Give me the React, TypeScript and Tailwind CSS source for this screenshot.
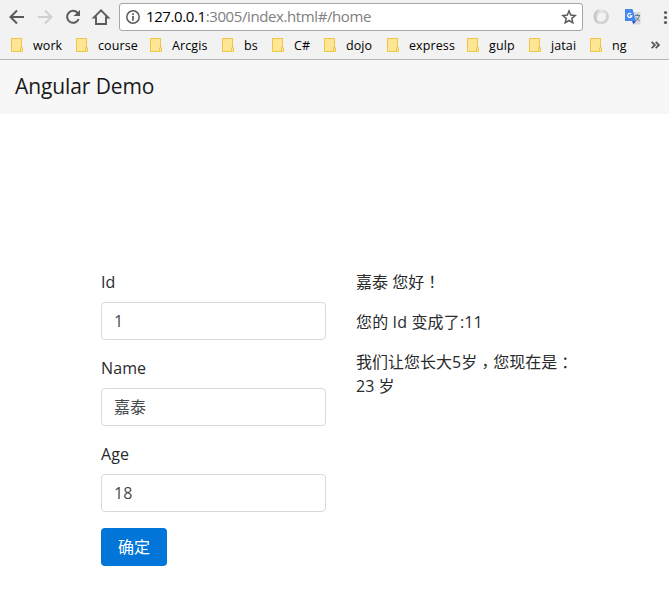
import { useState } from 'react';

const FONT = 'font-["Open_Sans","Noto_Sans_CJK_SC",sans-serif]';

const bookmarks = [
  { name: 'work', box: 'w-[65px]' },
  { name: 'course', box: 'w-[74px]' },
  { name: 'Arcgis', box: 'w-[72px]' },
  { name: 'bs', box: 'w-[50px]' },
  { name: 'C#', box: 'w-[52px]' },
  { name: 'dojo', box: 'w-[63px]' },
  { name: 'express', box: 'w-[80px]' },
  { name: 'gulp', box: 'w-[62px]' },
  { name: 'jatai', box: 'w-[61px]' },
  { name: 'ng', box: 'w-[62px]' },
];

function FolderIcon() {
  return (
    <svg width="12" height="14" viewBox="0 0 12 14" className="shrink-0" fill="#ffe694" stroke="#ecc54a">
      <rect x=".5" y=".5" width="10" height="13" />
      <rect x="9.500" y="9.500" width="2" height="4" rx=".5" />
    </svg>
  );
}

function Toolbar() {
  return (
    <div className="flex h-[34px] items-center">
      <svg width="119" height="34" viewBox="0 0 119 34" fill="none" className="shrink-0">
        <g stroke="#5a5a5a" strokeWidth="2">
          <path d="M24 17H11M17 10.500L10.500 17l6.500 6.500" />
          <path d="M38 17h13M45 10.500l6.500 6.500l-6.500 6.500" stroke="#d0d0d0" />
          <path d="M77.500 12.700A6 6 0 1 0 78.700 19" />
          <path d="M93.800 17.500h2.200V24h10v-6.500h2.200L101 10.300z" strokeWidth="1.900" />
        </g>
        <path d="M80 10v6h-6.500z" fill="#5a5a5a" />
      </svg>
      <div className="flex h-7 w-[464px] shrink-0 items-center rounded-[3px] border border-[#a5a5a5] bg-white">
        <svg width="14" height="14" viewBox="0 0 14 14" fill="none" stroke="#5a5a5a" className="ml-[6px] shrink-0">
          <circle cx="7" cy="7" r="6.200" strokeWidth="1.500" />
          <path d="M7 3.300v1.700M7 6v4.700" strokeWidth="1.700" />
        </svg>
        <div className="ml-[6px] grow whitespace-nowrap pb-[2px] text-[15px] leading-[24px] tracking-[-0.4px] text-[#808080]">
          <span className="text-black">127.0.0.1</span>:3005/index.html#/home
        </div>
        <svg width="16" height="16" viewBox="0 0 16 16" fill="none" stroke="#5a5a5a" strokeWidth="1.500" className="mr-[5px] shrink-0">
          <path d="M8 2l1.700 4.100 4.500.4-3.400 2.900 1 4.400L8 11.500l-3.800 2.300 1-4.400L1.800 6.500l4.500-.4z" />
        </svg>
      </div>
      <svg width="86" height="34" viewBox="583 0 86 34" className="shrink-0">
        <path d="M601 9.500C596.500 9 593.500 12.500 593.500 16.500c0 4 3 7.500 6.500 7.500c-2.500-2-3.500-4.500-3.500-7c0-3.500 2-6.500 4.500-7.500z" fill="#c6c6c6" />
        <path d="M600 9.500c4 0 6 3.500 6 6.500c0 3.500-2 5.500-5 5.500c-2.500 0-4-2-4-4.500c0 4.500 2 7 5 7c4 0 7-3.500 7-7.500c0-4-3.500-7.500-9-7z" fill="#d2d2d2" />
        <path d="M604.500 12.500c-3.500-2.500-7.500 0-7.500 4.500" fill="none" stroke="#dedede" strokeWidth="2" />
        <path d="M632 12h8.500v12.500H635z" fill="#d8d8d8" />
        <path d="M625 9h7.500l3.500 12h-11z" fill="#4688f1" />
        <path d="M632 21h4l-2.500 3.500z" fill="#2b59c3" />
        <path d="M631.200 13.900a2.100 2.100 0 1 0 .6 1.900h-2.100" fill="none" stroke="#fff" strokeWidth="1.200" />
        <path d="M635 15.500h5M637.500 14v1.500M639.500 15.500q-.8 3.500-3.500 5M636 17.500l3.500 3.500" fill="none" stroke="#607d8b" />
        <g fill="#5a5a5a"><circle cx="665.500" cy="12.500" r="1.600" /><circle cx="665.500" cy="17.500" r="1.600" /><circle cx="665.500" cy="22.500" r="1.600" /></g>
      </svg>
    </div>
  );
}

function BookmarkBar() {
  return (
    <div className="flex h-[22px] items-center pl-[11px]">
      {bookmarks.map((b) => (
        <div key={b.name} className={`flex shrink-0 items-center gap-[10px] ${b.box}`}>
          <FolderIcon />
          <span className="pt-[2px] text-[12.5px] leading-[18px] tracking-[0.1px] text-black">{b.name}</span>
        </div>
      ))}
      <svg width="9" height="8" viewBox="0 0 9 8" fill="none" stroke="#5a5a5a" strokeWidth="1.800" className="-ml-px shrink-0">
        <path d="M.7 .8L3.900 4L.7 7.200M4.700 .8L7.900 4L4.700 7.200" />
      </svg>
    </div>
  );
}

function Field({ label, value, onChange }: { label: string; value: string; onChange: (v: string) => void }) {
  return (
    <label className="mb-4 block">
      <span className="mb-2 block h-6 text-base leading-6 tracking-[0.1px] text-[#292b2c]">{label}</span>
      <input
        value={value}
        onChange={(e) => onChange(e.target.value)}
        className={`block h-[38px] w-full rounded-[4px] border border-[#d9d9d9] bg-white px-3 text-base leading-5 text-[#464a4c] outline-none ${label === 'Name' ? 'pb-[2px]' : ''}`}
      />
    </label>
  );
}

export default function App() {
  const [id, setId] = useState('1');
  const [name, setName] = useState('嘉泰');
  const [age, setAge] = useState('18');
  return (
    <div className={`h-[612px] w-[669px] overflow-hidden bg-white ${FONT}`}>
      <header className="h-[60px] border-b border-[#b6b6b6] bg-[#f2f2f2]">
        <Toolbar />
        <BookmarkBar />
      </header>
      <nav className="flex h-[54px] items-center bg-[#f7f7f7] pb-[2px] pl-[15px] text-[21px] leading-[30px] tracking-[-0.1px] text-[#1a1a1a]">Angular Demo</nav>
      <main className="flex gap-[30px] pl-[101px] pt-[156px]">
        <form className="w-[225px]" onSubmit={(e) => e.preventDefault()}>
          <Field label="Id" value={id} onChange={setId} />
          <Field label="Name" value={name} onChange={setName} />
          <Field label="Age" value={age} onChange={setAge} />
          <button className="h-[38px] w-[66px] rounded-[4px] bg-[#0275d8] text-base leading-6 text-white">确定</button>
        </form>
        <section className="w-[225px] whitespace-nowrap text-base leading-6 text-[#292b2c]">
          <p className="mb-4 h-6">{name} 您好<span className='font-["Noto_Sans_CJK_TC",sans-serif] leading-none'>！</span></p>
          <p className="mb-4 h-6 tracking-[0.15px]">您的 Id 变成了:{id}1</p>
          <p>
            我们让您长大5岁<span className='relative top-1 font-["Noto_Sans_CJK_TC",sans-serif] leading-none'>，</span>您现在是<span className='relative top-px font-["Noto_Sans_CJK_TC",sans-serif] leading-none'>：</span>
            <br />
            {Number(age) + 5} 岁
          </p>
        </section>
      </main>
    </div>
  );
}
